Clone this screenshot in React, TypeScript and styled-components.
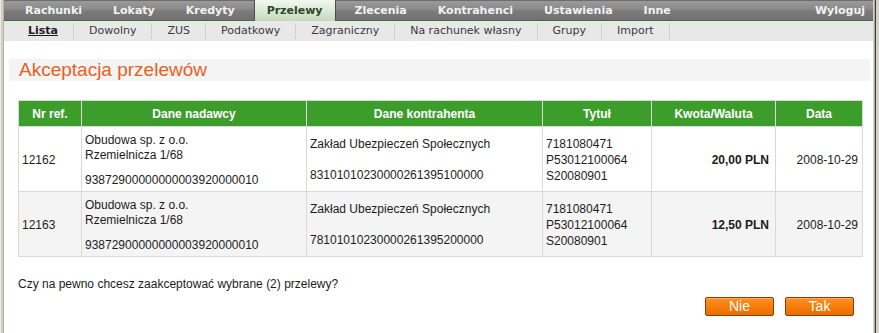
import React from "react";
import styled, { createGlobalStyle } from "styled-components";

const GlobalStyle = createGlobalStyle`
  html, body { margin: 0; padding: 0; background: #ffffff; }
  body { font-family: "Liberation Sans", Arial, sans-serif; }
  * { box-sizing: border-box; }
`;

const Frame = styled.div`
  display: flex;
  width: 879px;
  height: 333px;
  overflow: hidden;
  background: #ffffff;
`;

const LeftEdge = styled.div`
  width: 4px;
  flex: none;
  background: linear-gradient(to right, #ece9e2 0, #ece9e2 1px, #d4d0c8 1px, #d4d0c8 3px, #b4b0a8 3px);
`;

const RightEdge = styled.div`
  width: 6px;
  flex: none;
  background: linear-gradient(
    to right,
    #d6d6d6 0,
    #d6d6d6 1px,
    #a8a8a8 1px,
    #a8a8a8 2px,
    #404040 2px,
    #404040 3px,
    #d4d0c8 3px
  );
`;

const Main = styled.div`
  flex: 1;
  display: flex;
  flex-direction: column;
  min-width: 0;
`;

const TopNav = styled.nav`
  display: flex;
  align-items: stretch;
  height: 21px;
  padding-left: 9px;
  gap: 7px;
  border-bottom: 1px solid #40703a;
  background: linear-gradient(to bottom, #6c6c6c 0, #6c6c6c 1px, #9a9a9a 1px, #8a8a8a 45%, #7b7b7b 55%, #727272 100%);
  font-family: "DejaVu Sans", Verdana, sans-serif;
  font-weight: bold;
  font-size: 11px;
`;

const Tab = styled.a<{ $active?: boolean; $right?: boolean }>`
  display: flex;
  align-items: center;
  padding: 0 12px;
  margin-bottom: ${(p) => (p.$active ? "-1px" : "0")};
  margin-left: ${(p) => (p.$right ? "auto" : "0")};
  margin-right: ${(p) => (p.$right ? "-4px" : "0")};
  color: ${(p) => (p.$active ? "#2a4a23" : "#f2f2f2")};
  text-decoration: none;
  white-space: nowrap;
  background: ${(p) =>
    p.$active ? "linear-gradient(to bottom, #f3f8f0 0%, #dce9d6 50%, #c5d9bd 100%)" : "transparent"};
  border-left: ${(p) => (p.$active ? "1px solid #4e4e4e" : "none")};
  border-right: ${(p) => (p.$active ? "1px solid #4e4e4e" : "none")};
`;

const SubNav = styled.nav`
  display: flex;
  align-items: center;
  height: 20px;
  padding-left: 9px;
  background: #e8e8e8;
  font-family: "DejaVu Sans", Verdana, sans-serif;
  font-size: 11px;
`;

const SubItem = styled.a<{ $active?: boolean }>`
  display: block;
  padding: 0 15px;
  line-height: 16px;
  border-right: 1px solid #cfcfcf;
  color: ${(p) => (p.$active ? "#1e1e1e" : "#3a3a3a")};
  font-weight: ${(p) => (p.$active ? "bold" : "normal")};
  text-decoration: ${(p) => (p.$active ? "underline" : "none")};
  white-space: nowrap;
`;

const Content = styled.main`
  flex: 1;
  padding: 18px 3px 0 5px;
  background: #ffffff;
`;

const TitleBar = styled.div`
  height: 22px;
  padding-left: 10px;
  background: #f4f4f4;
`;

const Title = styled.h1`
  margin: 0;
  font-family: "Liberation Sans", Arial, sans-serif;
  font-weight: normal;
  font-size: 19px;
  line-height: 22px;
  color: #e95f1d;
`;

const Body = styled.div`
  padding: 0 8px 0 9px;
`;

const Table = styled.table`
  width: 844px;
  margin-top: 19px;
  border-collapse: collapse;
  table-layout: fixed;
  border: 1px solid #d9d9d9;
  font-family: "Liberation Sans", Arial, sans-serif;
  font-size: 12px;
  color: #1c1c1c;
`;

const Th = styled.th`
  height: 26px;
  padding: 0;
  background: #3c9d2b;
  color: #ffffff;
  font-weight: bold;
  font-size: 12px;
  text-align: center;
  border: 1px solid #d9d9d9;
  border-top: none;
`;

const Row = styled.tr<{ $alt?: boolean }>`
  background: ${(p) => (p.$alt ? "#f4f4f4" : "#ffffff")};
`;

const Td = styled.td<{ $align?: "left" | "right"; $padR?: number; $bold?: boolean }>`
  height: 65px;
  padding: 2px ${(p) => p.$padR ?? 3}px 0 3px;
  vertical-align: middle;
  text-align: ${(p) => p.$align ?? "left"};
  font-weight: ${(p) => (p.$bold ? "bold" : "normal")};
  border: 1px solid #d9d9d9;
  white-space: nowrap;
`;

const Line = styled.div<{ $gap?: number; $lh?: number }>`
  line-height: ${(p) => p.$lh ?? 15}px;
  margin-top: ${(p) => p.$gap ?? 0}px;
`;

const Question = styled.p`
  margin: 20px 0 0;
  font-size: 12px;
  line-height: 15px;
  color: #1c1c1c;
`;

const Actions = styled.div`
  display: flex;
  justify-content: flex-end;
  gap: 11px;
  margin-top: 5px;
  padding-right: 8px;
`;

const Button = styled.button`
  width: 69px;
  height: 19px;
  padding: 0;
  border: 1px solid #8b3e05;
  border-radius: 2px;
  background: linear-gradient(to bottom, #ff9124 0%, #f77c0c 50%, #ec6c00 100%);
  box-shadow: inset 0 1px 0 #ffae5c;
  color: #ffffff;
  font-family: "Liberation Sans", Arial, sans-serif;
  font-size: 14px;
  line-height: 17px;
  cursor: pointer;
`;

const tabs = ["Rachunki", "Lokaty", "Kredyty", "Przelewy", "Zlecenia", "Kontrahenci", "Ustawienia", "Inne"];
const subTabs = ["Lista", "Dowolny", "ZUS", "Podatkowy", "Zagraniczny", "Na rachunek własny", "Grupy", "Import"];

const cols = [63, 225, 236, 109, 124, 87];

const rows = [
  {
    ref: "12162",
    account: "83101010230000261395100000",
    amount: "20,00 PLN",
  },
  {
    ref: "12163",
    account: "78101010230000261395200000",
    amount: "12,50 PLN",
  },
];

export default function App() {
  return (
    <>
      <GlobalStyle />
      <Frame>
        <LeftEdge />
        <Main>
          <TopNav>
            {tabs.map((t) => (
              <Tab key={t} $active={t === "Przelewy"}>
                {t}
              </Tab>
            ))}
            <Tab $right>Wyloguj</Tab>
          </TopNav>
          <SubNav>
            {subTabs.map((t) => (
              <SubItem key={t} $active={t === "Lista"}>
                {t}
              </SubItem>
            ))}
          </SubNav>
          <Content>
            <TitleBar>
              <Title>Akceptacja przelewów</Title>
            </TitleBar>
            <Body>
              <Table>
                <colgroup>
                  {cols.map((w, i) => (
                    <col key={i} style={{ width: w }} />
                  ))}
                </colgroup>
                <thead>
                  <tr>
                    <Th>Nr ref.</Th>
                    <Th>Dane nadawcy</Th>
                    <Th>Dane kontrahenta</Th>
                    <Th>Tytuł</Th>
                    <Th>Kwota/Waluta</Th>
                    <Th>Data</Th>
                  </tr>
                </thead>
                <tbody>
                  {rows.map((r, i) => (
                    <Row key={r.ref} $alt={i % 2 === 1}>
                      <Td>{r.ref}</Td>
                      <Td>
                        <Line>Obudowa sp. z o.o.</Line>
                        <Line>Rzemielnicza 1/68</Line>
                        <Line $gap={10}>93872900000000003920000010</Line>
                      </Td>
                      <Td>
                        <Line>Zakład Ubezpieczeń Społecznych</Line>
                        <Line $gap={16}>{r.account}</Line>
                      </Td>
                      <Td>
                        <Line $lh={16}>7181080471</Line>
                        <Line $lh={16}>P53012100064</Line>
                        <Line $lh={16}>S20080901</Line>
                      </Td>
                      <Td $align="right" $padR={6} $bold>
                        {r.amount}
                      </Td>
                      <Td $align="right" $padR={4}>
                        2008-10-29
                      </Td>
                    </Row>
                  ))}
                </tbody>
              </Table>
              <Question>Czy na pewno chcesz zaakceptować wybrane (2) przelewy?</Question>
              <Actions>
                <Button type="button">Nie</Button>
                <Button type="button">Tak</Button>
              </Actions>
            </Body>
          </Content>
        </Main>
        <RightEdge />
      </Frame>
    </>
  );
}
